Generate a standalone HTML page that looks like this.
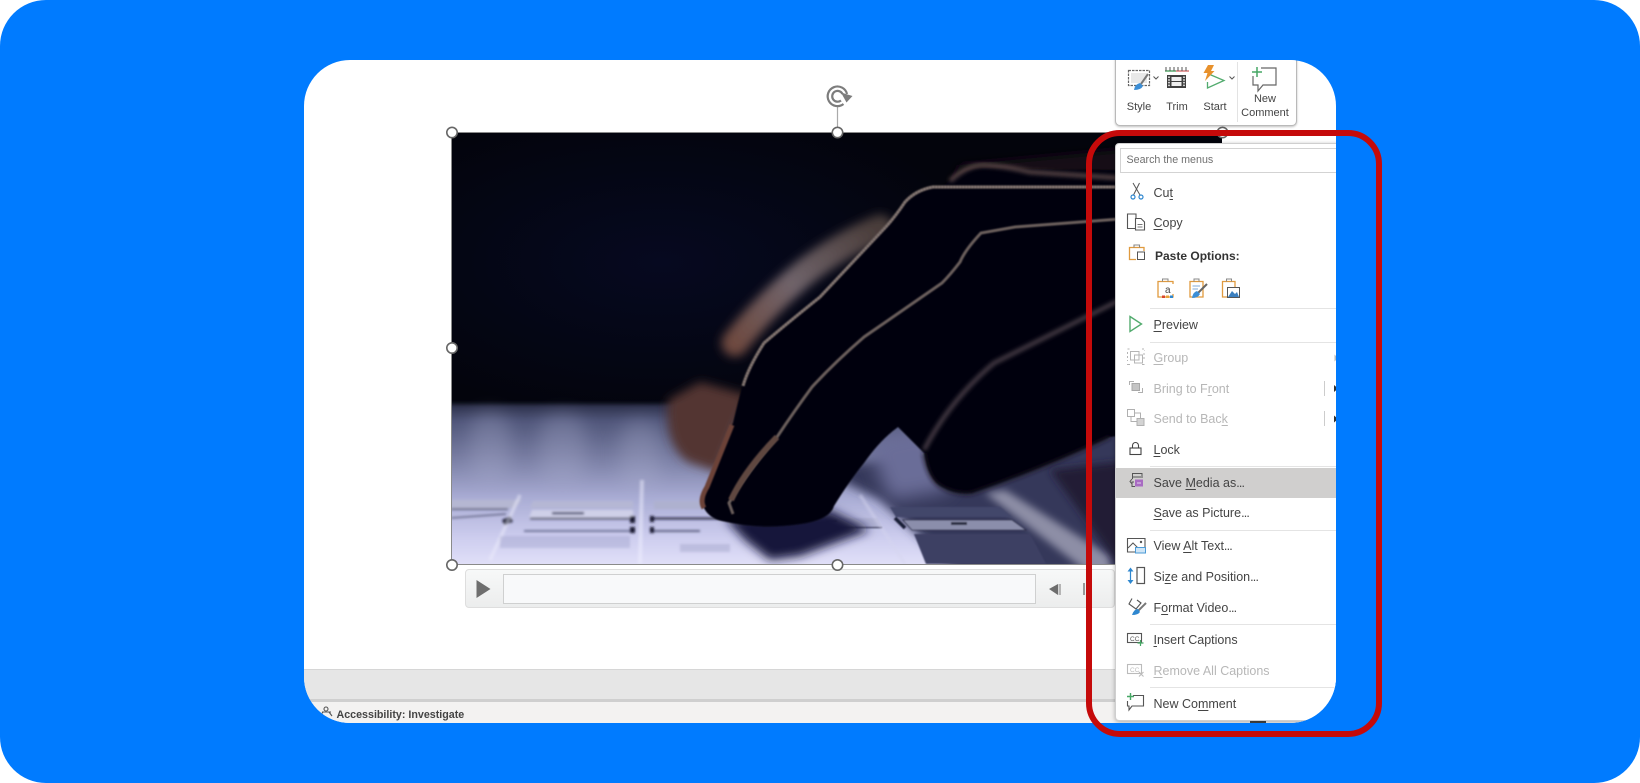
<!DOCTYPE html>
<html><head><meta charset="utf-8"><title>Save Media</title>
<style>
html,body{margin:0;padding:0;background:#fff;width:1640px;height:783px;overflow:hidden;font-family:"Liberation Sans",sans-serif}
#blue{position:absolute;left:0;top:0;width:1640px;height:783px;background:#007bff;border-radius:46px}
#panel{position:absolute;left:304px;top:60px;width:1032px;height:663px;background:#fff;border-radius:46px;overflow:hidden}
#in{position:absolute;left:-304px;top:-60px;width:1640px;height:783px}
.a{position:absolute}
svg{position:absolute;left:0;top:0}
#menu{position:absolute;left:1114.5px;top:142.5px;width:300px;height:578px;background:#fff;border:1px solid #cfcfcf;border-radius:4px;box-shadow:0 1px 4px rgba(0,0,0,.3);box-sizing:border-box}
.t{position:absolute;left:1153.5px;font-size:12.5px;line-height:16px;color:#444;white-space:nowrap}
.d{color:#b7b7b7}
.e{letter-spacing:-.8px}
.sep{position:absolute;left:1150px;width:200px;height:1px;background:#e4e4e4}
.tb{position:absolute;font-size:11px;line-height:13px;color:#444;text-align:center;white-space:nowrap}
u{text-underline-offset:1.5px;text-decoration-thickness:1px}
</style></head><body>
<div id="blue"></div>
<div id="panel"><div id="in">

<div class="a" style="left:304px;top:669px;width:1032px;height:30px;background:#e6e6e6;border-top:1px solid #d6d6d6;box-sizing:border-box"></div>
<div class="a" style="left:304px;top:699px;width:1032px;height:3px;background:#cfcfcf"></div>
<div class="a" style="left:304px;top:702px;width:1032px;height:21px;background:#f3f2f1"></div>
<div class="a" style="left:336.5px;top:708px;font-size:10.7px;line-height:14px;font-weight:bold;color:#444;white-space:nowrap">Accessibility: Investigate</div>
<div class="a" style="left:1250px;top:720.5px;width:16px;height:2px;background:#444"></div>

<div class="a" style="left:464.5px;top:569px;width:650px;height:39px;box-sizing:border-box;background:linear-gradient(#f7f8f8,#eceded);border:1px solid #dedede;border-radius:4px"></div>
<div class="a" style="left:503px;top:574px;width:533px;height:29.5px;box-sizing:border-box;background:#f8f9fa;border:1px solid #cfd0d0"></div>

<svg width="1640" height="783" viewBox="0 0 1640 783">
<defs>
<clipPath id="ic"><rect x="451" y="132" width="771" height="432"/></clipPath>
<filter id="b1" x="-20%" y="-20%" width="140%" height="140%"><feGaussianBlur stdDeviation="0.8"/></filter>
<filter id="b15" x="-20%" y="-20%" width="140%" height="140%"><feGaussianBlur stdDeviation="1.3"/></filter>
<filter id="b2" x="-20%" y="-20%" width="140%" height="140%"><feGaussianBlur stdDeviation="2"/></filter>
<filter id="b4" x="-30%" y="-30%" width="160%" height="160%"><feGaussianBlur stdDeviation="4"/></filter>
<filter id="b5" x="-30%" y="-30%" width="160%" height="160%"><feGaussianBlur stdDeviation="5"/></filter>
<filter id="b9" x="-30%" y="-30%" width="160%" height="160%"><feGaussianBlur stdDeviation="9"/></filter>
<linearGradient id="kb" x1="0" y1="0" x2="0" y2="1">
<stop offset="0" stop-color="#2a2e48"/><stop offset=".1" stop-color="#50567a"/><stop offset=".3" stop-color="#757a9f"/><stop offset=".55" stop-color="#a9acd4"/><stop offset=".8" stop-color="#cfcff0"/><stop offset="1" stop-color="#e8e6fb"/>
</linearGradient>
<radialGradient id="nv" cx=".35" cy=".45" r=".55"><stop offset="0" stop-color="#060920"/><stop offset="1" stop-color="#03040c"/></radialGradient>
<linearGradient id="bf" gradientUnits="userSpaceOnUse" x1="735" y1="345" x2="875" y2="225"><stop offset="0" stop-color="#6e4a40"/><stop offset=".45" stop-color="#6f636a"/><stop offset="1" stop-color="#4a3d3a"/></linearGradient>
</defs>

<g clip-path="url(#ic)">
<rect x="451" y="132" width="771" height="432" fill="#03040c"/>
<rect x="451" y="132" width="600" height="290" fill="url(#nv)"/>
<rect x="440" y="404" width="800" height="170" fill="url(#kb)" filter="url(#b2)"/>
<g filter="url(#b9)" opacity=".28">
<rect x="470" y="412" width="40" height="70" rx="18" fill="#b0b4d4"/>
<rect x="540" y="414" width="45" height="70" rx="18" fill="#b0b4d4"/>
<rect x="620" y="420" width="40" height="70" rx="18" fill="#b0b4d4"/>
</g>
<path d="M820 470L1222 400V574H960L880 500Z" fill="#34375a" filter="url(#b5)"/>
<path d="M866 440L930 425L950 490L890 500Z" fill="#6a6d98" filter="url(#b9)"/>
<path d="M985 493L1005 490L1110 556V574H1090Z" fill="#8d8ea6" filter="url(#b4)"/>
<path d="M1050 470L1222 450V574H1125Z" fill="#201f34" filter="url(#b4)"/>
<g filter="url(#b1)">
<path d="M890 507H1000L1012 517H896Z" fill="#43476a"/>
<path d="M903 520H1012L1026 530H912Z" fill="#8b8eab" stroke="#2b2e48" stroke-width=".8"/>
<rect x="951" y="522" width="16" height="3" fill="#2b2d42"/>
<path d="M914 534H1030L1046 564H926Z" fill="#3c4064"/>
<path d="M816 518H877L882 527H812Z" fill="#b0b2d4"/>
<path d="M812 527.500H882" stroke="#2a2d50" stroke-width="1.200"/>
<rect x="825" y="520" width="12" height="2.500" fill="#23263f"/>
<path d="M895 518L905 528" stroke="#191b34" stroke-width="3.500"/>
</g>
<path d="M860 495L905 564" stroke="#d5d5ee" stroke-width="3" opacity=".5" filter="url(#b15)"/>
<g filter="url(#b15)">
<path d="M451 500H522L515 508H451Z" fill="#b5b7d2"/>
<path d="M451 509H508" stroke="#2a2d4a" stroke-width="1.200"/>
<path d="M451 518L506 514" stroke="#3a3d5c" stroke-width="1"/>
<path d="M533 501H633V508H530Z" fill="#b5b7d4"/>
<path d="M532 510H633V518H529Z" fill="#cfd0e8"/>
<path d="M530 518.500H632" stroke="#1c1f3c" stroke-width="1.600"/>
<rect x="552" y="512" width="32" height="2.500" fill="#4a4d70"/>
<path d="M524 531H632" stroke="#565a80" stroke-width="1.600"/>
<rect x="654" y="501" width="50" height="8" fill="#aeb1cf"/>
<path d="M654 518.500H730" stroke="#14162e" stroke-width="1.800"/>
<path d="M652 531H700" stroke="#3f4263" stroke-width="1.600"/>
<rect x="503" y="518" width="9" height="6" fill="#14172e" transform="rotate(-25 507 521)"/>
<rect x="630" y="516" width="5" height="7" fill="#14172e"/>
<rect x="630" y="527" width="5" height="6" fill="#14172e"/>
<rect x="650" y="516" width="4" height="6" fill="#14172e"/>
<rect x="650" y="527" width="4" height="6" fill="#14172e"/>
<path d="M520 495L490 560" stroke="#eeeefc" stroke-width="3.500" opacity=".5"/>
<path d="M642 480L640 564" stroke="#f0f0ff" stroke-width="4" opacity=".5"/>
<rect x="500" y="536" width="130" height="12" fill="#8c8fb8" opacity=".3"/>
<rect x="680" y="544" width="50" height="8" fill="#9093bb" opacity=".35"/>
</g>
<path d="M725 518L830 510L870 530L800 556L770 560L745 540Z" fill="#14163a" filter="url(#b5)"/>

<path d="M668 400Q664 445 688 462L718 472L748 395L700 382Z" fill="#523630" filter="url(#b5)"/>
<path d="M735 343Q765 305 805 272Q840 245 880 228" stroke="url(#bf)" stroke-width="27" fill="none" stroke-linecap="round" filter="url(#b5)"/>
<path d="M960 165L1120 150V178L950 186Z" fill="#141012" filter="url(#b5)"/>
<path d="M1230 172L985 168Q962 168 945 184L933 187Q915 190 905 202Q893 220 881 232Q850 265 820 297Q785 325 764 343Q745 370 742 387Q736 410 733 423Q718 455 707 487Q699 500 703 506Q708 518 722 521Q760 530 800 524Q830 520 834 506Q850 480 864 463Q880 440 898 427L924 453Q928 480 942 487Q956 495 972 493Q1040 470 1110 437L1230 420Z" fill="#040409" filter="url(#b1)"/>
<path d="M950 181Q968 164 985 165Q1005 166 1030 172L1120 178" stroke="#5d4a49" stroke-width="4" fill="none" filter="url(#b2)"/>
<path d="M1120 187L933 187Q916 190 905 202Q893 220 881 232Q850 265 820 297Q785 325 764 343Q748 368 743 386" stroke="#6f6360" stroke-width="3.200" fill="none" filter="url(#b1)"/>
<path d="M1120 187L933 187Q916 190 905 202Q893 220 881 232Q850 265 820 297Q785 325 764 343Q748 368 743 386" stroke="#a09490" stroke-width="1.400" stroke-dasharray="1.500 1.500" fill="none" filter="url(#b1)" opacity=".7"/>
<path d="M1120 219L1015 227L981 233Q965 250 960 262Q950 275 942 283L864 337Q835 362 812 387Q795 410 777 437Q745 475 729 503L733 514" stroke="#6a5e5c" stroke-width="3" fill="none" filter="url(#b1)"/>
<path d="M732 425Q720 455 707 487Q699 500 704 508" stroke="#6c4339" stroke-width="5" fill="none" filter="url(#b1)"/>
<path d="M777 437Q745 470 731 500" stroke="#5f4741" stroke-width="6" fill="none" filter="url(#b1)"/>
<path d="M1120 300L1060 330L994 363Q950 400 924 450" stroke="#4c4148" stroke-width="4" fill="none" filter="url(#b2)"/>
<path d="M924 453Q928 480 942 487Q956 495 972 493Q1040 470 1110 437" stroke="#1a1620" stroke-width="3" fill="none" filter="url(#b2)"/>
</g>
<path d="M451.500 564.500V132.500H1222" fill="none" stroke="#8a8a8a" stroke-width="1"/>
<path d="M451.500 564.500H1222" fill="none" stroke="#8a8a8a" stroke-width="1"/>
<path d="M837.500 105V132" stroke="#aaa" stroke-width="1.200"/>
<g fill="#fff" stroke="#666" stroke-width="1.600">
<circle cx="452" cy="132.500" r="5.200"/><circle cx="837.500" cy="132.500" r="5.200"/><circle cx="1222.500" cy="132.500" r="5.200"/>
<circle cx="452" cy="348" r="5.200"/><circle cx="452" cy="565" r="5.200"/><circle cx="837.500" cy="565" r="5.200"/>
</g>
<g fill="none" stroke="#7d7d7d" stroke-width="2.200">
<path d="M843.500 104A9.800 9.800 0 1 1 847 94"/>
<path d="M841 100.500A5.400 5.400 0 1 1 842.500 94"/>
</g>
<path d="M841 92.500L852.500 96L846.500 102.500Z" fill="#7d7d7d"/>
<path d="M476.500 580L490.500 589L476.500 598Z" fill="#6e6e6e"/>
<path d="M1049 589L1058 584V595Z" fill="#6d6d6d"/>
<rect x="1058.500" y="584" width="2.500" height="11" fill="#b5b5b5"/>
<rect x="1083" y="583" width="2" height="12" fill="#999"/>
<g stroke="#555" stroke-width="1.100" fill="none"><circle cx="326" cy="709" r="2"/><path d="M320 716L323 712M332 716L329 712M322 712H331"/></g>
</svg>

<div class="a" style="left:1114.500px;top:50px;width:182.500px;height:75.500px;box-sizing:border-box;background:#fff;border:1px solid #b9b9b9;border-radius:5px;box-shadow:0 1px 2px rgba(0,0,0,.25)"></div>
<div class="a" style="left:1237px;top:62px;width:1px;height:60px;background:#e3e3e3"></div>
<div class="tb" style="left:1119px;width:40px;top:100.500px">Style</div>
<div class="tb" style="left:1157px;width:40px;top:100.500px">Trim</div>
<div class="tb" style="left:1195px;width:40px;top:100.500px">Start</div>
<div class="tb" style="left:1235px;width:60px;top:92.500px">New</div>
<div class="tb" style="left:1235px;width:60px;top:106.500px">Comment</div>

<div id="menu"></div>
<div class="a" style="left:1120px;top:148px;width:240px;height:25px;box-sizing:border-box;border:1px solid #d3d3d3;background:#fff"></div>
<div class="a" style="left:1126.500px;top:154px;font-size:10.700px;line-height:13px;color:#707070;white-space:nowrap">Search the menus</div>
<div class="a" style="left:1116px;top:467.500px;width:230px;height:30.500px;background:#d0cfce"></div>
<div class="sep" style="top:308px"></div>
<div class="sep" style="top:342px"></div>
<div class="sep" style="top:466px"></div>
<div class="sep" style="top:530px"></div>
<div class="sep" style="top:624px"></div>
<div class="sep" style="top:687px"></div>

<div class="t" style="top:185px">Cu<u>t</u></div>
<div class="t" style="top:215px"><u>C</u>opy</div>
<div class="t" style="top:248px;left:1155px;font-size:12px;font-weight:bold;color:#333">Paste Options:</div>
<div class="t" style="top:317px"><u>P</u>review</div>
<div class="t d" style="top:350px"><u>G</u>roup</div>
<div class="t d" style="top:381px">Bring to F<u>r</u>ont</div>
<div class="t d" style="top:411px">Send to Bac<u>k</u></div>
<div class="t" style="top:442px"><u>L</u>ock</div>
<div class="t" style="top:475px">Save <u>M</u>edia as<span class="e">...</span></div>
<div class="t" style="top:505px"><u>S</u>ave as Picture<span class="e">...</span></div>
<div class="t" style="top:538px">View <u>A</u>lt Text<span class="e">...</span></div>
<div class="t" style="top:569px">Si<u>z</u>e and Position<span class="e">...</span></div>
<div class="t" style="top:600px">F<u>o</u>rmat Video<span class="e">...</span></div>
<div class="t" style="top:632px"><u>I</u>nsert Captions</div>
<div class="t d" style="top:663px"><u>R</u>emove All Captions</div>
<div class="t" style="top:696px">New Co<u>m</u>ment</div>

<svg width="1640" height="783" viewBox="0 0 1640 783" fill="none">
<rect x="1128.500" y="70.500" width="21" height="15" stroke="#666" stroke-width="1.200" stroke-dasharray="2.500 1"/>
<rect x="1131" y="73" width="16" height="10" fill="#e8e8e8"/>
<path d="M1148 74L1141 84" stroke="#777" stroke-width="2"/>
<path d="M1134 90Q1135 84 1140 83L1143 86Q1141 90 1134 90Z" fill="#3b8ed6"/>
<path d="M1153.500 76.500L1156 79L1158.500 76.500" stroke="#555" stroke-width="1"/>
<path d="M1165 71H1176" stroke="#5aa96f" stroke-width="1.500"/><path d="M1176 71H1189" stroke="#d97a7a" stroke-width="1.500"/>
<path d="M1166 67V71M1170 67V71M1174 67V71M1178 67V71M1182 67V71M1186 67V71" stroke="#555"/>
<rect x="1167" y="75" width="19" height="13" fill="#3f3f3f"/>
<rect x="1171.500" y="77" width="10" height="4" fill="#eee"/><rect x="1171.500" y="82" width="10" height="4" fill="#eee"/>
<path d="M1169 76.500V87M1184 76.500V87" stroke="#fff" stroke-width="1.500" stroke-dasharray="1.500 1.200"/>
<path d="M1207.500 73.500L1224 80.500L1207.500 88V82" stroke="#52ab6e" stroke-width="1.300"/>
<path d="M1208 65H1214L1211 71H1214.500L1205 81L1207.500 73H1203.500Z" fill="#e8912c"/>
<path d="M1229.500 76.500L1232 79L1234.500 76.500" stroke="#555" stroke-width="1"/>
<path d="M1261 68H1276V85H1263L1258 91V85H1253V76" stroke="#666" stroke-width="1.200"/>
<path d="M1257 67V77M1252 72H1262" stroke="#46a765" stroke-width="1.500"/>

<path d="M1133 183L1140 195M1139.500 183L1133.500 195" stroke="#555" stroke-width="1"/>
<circle cx="1133" cy="197" r="2" stroke="#2e87cf" stroke-width="1.200"/><circle cx="1141" cy="197" r="2" stroke="#2e87cf" stroke-width="1.200"/>
<path d="M1135 228.500H1127.500V214H1136V218" stroke="#555" stroke-width="1.100"/>
<path d="M1135.500 218.500H1141L1144.500 222V230H1135.500Z" stroke="#555" stroke-width="1.100"/>
<path d="M1137.500 224.500H1142.500M1137.500 227H1142.500" stroke="#777"/>
<path d="M1136 259.500H1129.500V247.500H1144V251" stroke="#e09a3e" stroke-width="1.300"/>
<path d="M1134 247.500V245H1139.500V247.500" stroke="#888" stroke-width="1.100"/>
<rect x="1137.500" y="252" width="7" height="7.500" stroke="#555" fill="#fff"/>
<path d="M1158 281.500H1173V297H1158Z" stroke="#e09a3e" stroke-width="1.300"/>
<path d="M1162.500 281.500V279H1168V281.500" stroke="#888"/>
<rect x="1162" y="284" width="12" height="10" fill="#fff"/>
<text x="1165" y="293" font-size="10" fill="#444" font-family="Liberation Sans, sans-serif">a</text>
<rect x="1162" y="295.500" width="3" height="2.500" fill="#d8452e"/><rect x="1166" y="295.500" width="3" height="2.500" fill="#e8a33a"/><rect x="1170" y="295.500" width="3" height="2.500" fill="#2e87cf"/>
<path d="M1190 281.500H1203V297H1190Z" stroke="#e09a3e" stroke-width="1.300"/>
<path d="M1194 281.500V279H1199V281.500" stroke="#888"/>
<path d="M1192.500 286H1200M1192.500 289H1198" stroke="#7faad8"/>
<path d="M1207 284L1198 293" stroke="#666" stroke-width="2"/>
<path d="M1192 298Q1193 292 1197 291L1200 294Q1198 298 1192 298Z" fill="#3b8ed6"/>
<path d="M1222.500 281.500H1235V297H1222.500Z" stroke="#e09a3e" stroke-width="1.300"/>
<path d="M1226.500 281.500V279H1231.500V281.500" stroke="#888"/>
<rect x="1227.500" y="287.500" width="12" height="10" stroke="#555" fill="#fff"/>
<path d="M1228 297L1232 291L1235 294L1237 292L1239 297Z" fill="#3b7fbf"/>
<path d="M1130 316.500L1141.500 324L1130 331.500Z" stroke="#52ab6e" stroke-width="1.400"/>
<g stroke="#b5b5b5">
<rect x="1130.500" y="351.500" width="8.500" height="8.500"/><rect x="1134.500" y="355" width="8" height="8"/>
<path d="M1127.500 349H1130M1142 349H1144.500V351M1127.500 352V361M1144 353V361" stroke-dasharray="2 2"/>
<path d="M1127 364.500H1130M1142 364.500H1144.500"/>
</g>
<path d="M1129.500 385V381.500H1134" stroke="#b0b0b0"/>
<rect x="1132" y="383.500" width="7.500" height="7" fill="#c4c4c4" stroke="#a8a8a8"/>
<path d="M1142.500 388V392.500H1138" stroke="#b0b0b0"/>
<rect x="1127.500" y="409.500" width="7" height="7" stroke="#b0b0b0"/>
<rect x="1137" y="418.500" width="7" height="7" fill="#d3d3d3" stroke="#b0b0b0"/>
<path d="M1131 417V421.500H1137M1135 413H1140.500V418" stroke="#b0b0b0"/>
<rect x="1130" y="448" width="11" height="6.500" stroke="#444" stroke-width="1.100"/>
<path d="M1132.500 448V445.500A3 3 0 0 1 1138.500 445.500V448" stroke="#444" stroke-width="1.100"/>
<path d="M1132.500 479V473.500H1142V478M1133 477H1141" stroke="#555"/>
<path d="M1132 479L1130 481.500L1132 484M1134 482H1132V486.500H1135" stroke="#555"/>
<rect x="1135" y="479.500" width="8" height="7" fill="#a86bc2"/>
<path d="M1137 483H1141" stroke="#e5d3ee"/>
<path d="M1135 552H1127.500V538.500H1145V547" stroke="#555" stroke-width="1.100"/>
<path d="M1128 548L1133 543L1138 548" stroke="#555"/><circle cx="1141" cy="542" r="1.200" fill="#555"/>
<rect x="1135.500" y="547.500" width="10" height="5.500" fill="#cfe5f6" stroke="#4b9ad6"/>
<path d="M1130.500 570V581" stroke="#2e87cf" stroke-width="1.200"/>
<path d="M1127.500 571.500L1130.500 567.500L1133.500 571.500ZM1127.500 580L1130.500 584L1133.500 580Z" fill="#2e87cf"/>
<rect x="1137" y="567.500" width="7.500" height="16" stroke="#555" stroke-width="1.200"/>
<path d="M1132 598.500L1129 604L1136 609L1141 603L1137 600" stroke="#555" stroke-width="1.100"/>
<path d="M1146 603L1138 611" stroke="#777" stroke-width="2"/>
<path d="M1132 615Q1134 609 1138 609L1140 612Q1138 615 1132 615Z" fill="#2e87cf"/>
<rect x="1127.500" y="633.500" width="14" height="9" stroke="#555" stroke-width="1.100"/>
<text x="1130" y="641" font-size="6.500" fill="#555" font-family="Liberation Sans, sans-serif">CC</text>
<path d="M1140.500 640V646M1137.500 643H1143.500" stroke="#46a765" stroke-width="1.200"/>
<rect x="1127.500" y="664.500" width="14" height="9" stroke="#bbb" stroke-width="1.100"/>
<text x="1130" y="672" font-size="6.500" fill="#bbb" font-family="Liberation Sans, sans-serif">CC</text>
<path d="M1139 672L1143.500 676.500M1143.500 672L1139 676.500" stroke="#bbb" stroke-width="1.100"/>
<path d="M1133 695.500H1143.500V706H1132L1129 710V706H1127.500V701" stroke="#555" stroke-width="1.100"/>
<path d="M1130.500 693V700M1127 696.500H1134" stroke="#46a765" stroke-width="1.400"/>
<path d="M1334.500 354.500L1338 358L1334.500 361.500Z" fill="#bbb"/>
<path d="M1324.500 381V396M1324.500 411V426" stroke="#ccc"/>
<path d="M1334 385L1338 388.500L1334 392Z" fill="#333"/>
<path d="M1334 415.500L1338 419L1334 422.500Z" fill="#333"/>
</svg>
</div></div>

<div class="a" style="left:1086px;top:130px;width:296px;height:607px;box-sizing:border-box;border:6px solid #c50a0a;border-radius:34px"></div>
</body></html>
